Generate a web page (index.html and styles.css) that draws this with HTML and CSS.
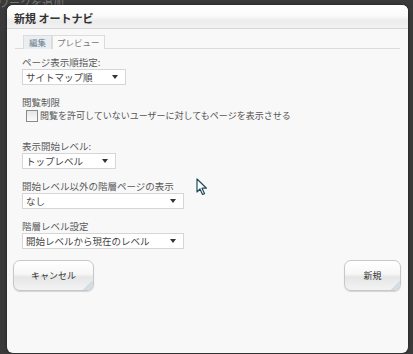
FILE: index.html
```html
<!DOCTYPE html>
<html lang="ja">
<head>
  <meta charset="UTF-8">
  <title>新規 オートナビ</title>
  <link rel="stylesheet" href="styles.css">
</head>
<body>
  <div class="backdrop">
    <div class="bg-text">ワークを追加</div>
  </div>
  <div class="dialog">
    <div class="title-bar">新規 オートナビ</div>
    <div class="dialog-body">
      <div class="tabs">
        <span class="tab active">編集</span>
        <span class="tab">プレビュー</span>
      </div>

      <div class="field">
        <div class="label">ページ表示順指定:</div>
        <div class="select w-104">サイトマップ順<span class="arrow"></span></div>
      </div>

      <div class="field field-check">
        <div class="label">閲覧制限</div>
        <label class="check"><span class="box"></span>閲覧を許可していないユーザーに対してもページを表示させる</label>
      </div>

      <div class="field">
        <div class="label">表示開始レベル:</div>
        <div class="select w-94">トップレベル<span class="arrow"></span></div>
      </div>

      <div class="field">
        <div class="label">開始レベル以外の階層ページの表示</div>
        <div class="select w-162">なし<span class="arrow"></span></div>
      </div>

      <div class="field">
        <div class="label">階層レベル設定</div>
        <div class="select w-162">開始レベルから現在のレベル<span class="arrow"></span></div>
      </div>

      <div class="buttons">
        <button class="btn btn-cancel">キャンセル</button>
        <button class="btn btn-new">新規</button>
      </div>
    </div>
    <svg class="cursor" width="12" height="18" viewBox="0 0 12 18">
      <path d="M1 1 L1 14 L4 11 L6.5 16.5 L8.5 15.6 L6 10.2 L10.5 10.2 Z" fill="#fff" stroke="#1f4e5a" stroke-width="1.2" stroke-linejoin="round"/>
    </svg>
  </div>
</body>
</html>
```

FILE: styles.css
```css
* { margin: 0; padding: 0; box-sizing: border-box; }
body {
  background: #3b3b3b;
  font-family: "Noto Sans CJK JP", "Noto Sans", sans-serif;
  font-size: 9px;
  color: #555;
  width: 413px;
  height: 354px;
  overflow: hidden;
  position: relative;
}
.backdrop {
  position: absolute;
  top: 0;
  left: 0;
  width: 413px;
  height: 354px;
  background: #3a3a3a;
}
.bg-text {
  color: #777;
  font-size: 11px;
  line-height: 12px;
  margin: -4px 0 0 -2px;
}
/* Dialog */
.dialog {
  position: absolute;
  top: 5px;
  left: 7px;
  width: 401px;
  height: 348px;
  background: #f8f8f8;
  border-radius: 6px;
  box-shadow: 0 0 3px rgba(0,0,0,0.5);
  overflow: hidden;
}
.title-bar {
  height: 24px;
  padding: 5px 0 0 7px;
  font-size: 11px;
  font-weight: bold;
  color: #333;
  background: linear-gradient(#ffffff 0%, #fbfbfb 45%, #ececec 70%, #f2f2f2 100%);
  border-bottom: 1px solid #d6d6d6;
}
.dialog-body {
  padding: 6px 8px 0 8px;
}
.tabs {
  display: flex;
  padding-left: 8px;
  border-bottom: 1px solid #dcdcdc;
  height: 14px;
  margin-bottom: 7px;
}
.tab {
  font-size: 8.5px;
  color: #777;
  height: 14px;
  line-height: 13px;
  padding: 0 4px;
  border: 1px solid #dcdcdc;
  border-bottom: none;
  background: #fafafa;
}
.tab.active {
  background: #e9eef3;
  color: #6b7a88;
  padding: 0 5px;
}
.field {
  padding-left: 7px;
  margin-bottom: 11px;
}
.field-check { margin-bottom: 18px; }
.label {
  font-size: 9.5px;
  line-height: 12px;
  color: #5a5a5a;
  margin-bottom: 1px;
}
.select {
  position: relative;
  height: 16px;
  line-height: 14px;
  padding-left: 3px;
  background: #fff;
  border: 1px solid #d6d6d6;
  font-size: 9.5px;
  color: #444;
}
.w-104 { width: 104px; }
.w-94 { width: 94px; }
.w-162 { width: 162px; }
.arrow {
  position: absolute;
  right: 7px;
  top: 5px;
  width: 0;
  height: 0;
  border-left: 3px solid transparent;
  border-right: 3px solid transparent;
  border-top: 4px solid #333;
}
.check {
  display: flex;
  align-items: center;
  gap: 2px;
  padding-left: 4px;
  font-size: 9px;
  color: #555;
  line-height: 13px;
}
.box {
  width: 12px;
  height: 12px;
  border: 1px solid #8a8a8a;
  background: linear-gradient(#e6e6e6, #fafafa);
}
/* Buttons */
.buttons {
  display: flex;
  justify-content: space-between;
  margin-top: 4px;
}
.btn {
  height: 31px;
  border: 1px solid #c7c7c7;
  border-radius: 7px;
  background: linear-gradient(#ffffff 0%, #f7f7f7 45%, #e6e6e6 55%, #f3f3f3 100%);
  box-shadow: 0 1px 1px rgba(0,0,0,0.15);
  font-family: "Noto Sans CJK JP", sans-serif;
  font-size: 9px;
  color: #333;
  position: relative;
  overflow: hidden;
}
.btn::after {
  content: "";
  position: absolute;
  right: 0;
  bottom: 0;
  width: 10px;
  height: 10px;
  background: linear-gradient(135deg, transparent 50%, #d3dde4 50%);
}
.btn-cancel { width: 81px; margin-left: -2px; }
.btn-new { width: 57px; margin-right: -1px; }
.cursor {
  position: absolute;
  left: 189px;
  top: 173px;
}
```
